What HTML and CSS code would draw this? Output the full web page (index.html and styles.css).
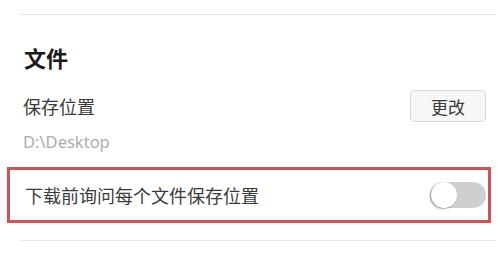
FILE: index.html
```html
<!DOCTYPE html>
<html lang="zh-CN">
  <head>
    <meta charset="UTF-8" />
    <meta name="viewport" content="width=device-width, initial-scale=1.0" />
    <title>设置 - 文件</title>
    <link rel="stylesheet" href="styles.css">
  </head>
  <body>
    <section class="settings">
      <hr class="divider" />

      <h2 class="section-title">文件</h2>

      <div class="setting-row">
        <span class="label">保存位置</span>
        <button class="btn" type="button">更改</button>
      </div>
      <div class="path">D:\Desktop</div>

      <div class="setting-row highlight">
        <span class="label">下载前询问每个文件保存位置</span>
        <span class="switch"><span class="knob"></span></span>
      </div>

      <hr class="divider" />
    </section>
  </body>
</html>
```

FILE: styles.css
```css
body {
  margin: 0;
  background: #fff;
  font-family: "Noto Sans CJK SC", "Noto Sans", sans-serif;
  color: #333;
}

.settings {
  margin-left: 20px;
  width: 476px;
  padding-top: 14px;
}

.divider {
  margin: 0;
  border: 0;
  border-top: 1px solid #e6e6e6;
}

.section-title {
  margin: 27px 0 0 4px;
  font-size: 22px;
  font-weight: bold;
  line-height: 30px;
  color: #1a1a1a;
}

.setting-row {
  display: flex;
  align-items: center;
  justify-content: space-between;
  padding: 0 10px 0 3px;
}

.setting-row:first-of-type {
  margin-top: 18px;
}

.label {
  font-size: 18px;
  line-height: 24px;
  color: #3a3a3a;
}

.btn {
  width: 76px;
  height: 32px;
  border: 1px solid #d9d9d9;
  border-radius: 4px;
  background: #f7f7f7;
  font-family: inherit;
  font-size: 17px;
  color: #3a3a3a;
  padding: 0;
}

.path {
  padding-left: 3px;
  margin-top: 10px;
  font-family: "Noto Sans", sans-serif;
  font-size: 16.5px;
  line-height: 20px;
  color: #acacac;
}

.highlight {
  margin: 15px 5px 17px -13px;
  padding: 0 2px 0 15px;
  height: 50px;
  border: 3px solid #d05252;
}

.switch {
  position: relative;
  width: 56px;
  height: 26px;
  border-radius: 13px;
  background: #cfcfcf;
}

.knob {
  position: absolute;
  left: 1px;
  top: 0;
  width: 26px;
  height: 26px;
  border-radius: 50%;
  background: #fff;
  box-shadow: -1px 1px 2px rgba(0, 0, 0, 0.35);
}
```
